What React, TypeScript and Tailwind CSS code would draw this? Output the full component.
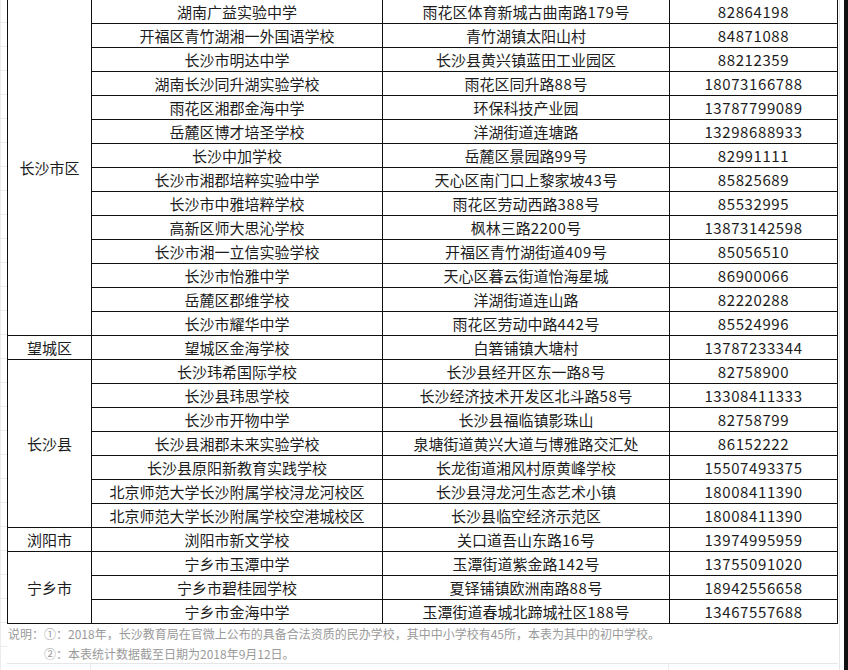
import React from "react";

type Row = [string, string, string];
type Group = { name: string; rows: Row[] };

const groups: Group[] = [
  {
    name: "长沙市区",
    rows: [
      ["湖南广益实验中学", "雨花区体育新城古曲南路179号", "82864198"],
      ["开福区青竹湖湘一外国语学校", "青竹湖镇太阳山村", "84871088"],
      ["长沙市明达中学", "长沙县黄兴镇蓝田工业园区", "88212359"],
      ["湖南长沙同升湖实验学校", "雨花区同升路88号", "18073166788"],
      ["雨花区湘郡金海中学", "环保科技产业园", "13787799089"],
      ["岳麓区博才培圣学校", "洋湖街道连塘路", "13298688933"],
      ["长沙中加学校", "岳麓区景园路99号", "82991111"],
      ["长沙市湘郡培粹实验中学", "天心区南门口上黎家坡43号", "85825689"],
      ["长沙市中雅培粹学校", "雨花区劳动西路388号", "85532995"],
      ["高新区师大思沁学校", "枫林三路2200号", "13873142598"],
      ["长沙市湘一立信实验学校", "开福区青竹湖街道409号", "85056510"],
      ["长沙市怡雅中学", "天心区暮云街道怡海星城", "86900066"],
      ["岳麓区郡维学校", "洋湖街道连山路", "82220288"],
      ["长沙市耀华中学", "雨花区劳动中路442号", "85524996"],
    ],
  },
  {
    name: "望城区",
    rows: [["望城区金海学校", "白箬铺镇大塘村", "13787233344"]],
  },
  {
    name: "长沙县",
    rows: [
      ["长沙玮希国际学校", "长沙县经开区东一路8号", "82758900"],
      ["长沙县玮思学校", "长沙经济技术开发区北斗路58号", "13308411333"],
      ["长沙市开物中学", "长沙县福临镇影珠山", "82758799"],
      ["长沙县湘郡未来实验学校", "泉塘街道黄兴大道与博雅路交汇处", "86152222"],
      ["长沙县原阳新教育实践学校", "长龙街道湘风村原黄峰学校", "15507493375"],
      ["北京师范大学长沙附属学校浔龙河校区", "长沙县浔龙河生态艺术小镇", "18008411390"],
      ["北京师范大学长沙附属学校空港城校区", "长沙县临空经济示范区", "18008411390"],
    ],
  },
  {
    name: "浏阳市",
    rows: [["浏阳市新文学校", "关口道吾山东路16号", "13974995959"]],
  },
  {
    name: "宁乡市",
    rows: [
      ["宁乡市玉潭中学", "玉潭街道紫金路142号", "13755091020"],
      ["宁乡市碧桂园学校", "夏铎铺镇欧洲南路88号", "18942556658"],
      ["宁乡市金海中学", "玉潭街道春城北蹄城社区188号", "13467557688"],
    ],
  },
];

const totalRows = groups.reduce((s, g) => s + g.rows.length, 0);

function Mixed({ text }: { text: string }) {
  const parts = text.split(/(\d+)/);
  return (
    <>
      {parts.map((p, i) =>
        /^\d+$/.test(p) ? (
          <span key={i} className="tracking-[0.6px]">
            {p}
          </span>
        ) : (
          <span key={i}>{p}</span>
        )
      )}
    </>
  );
}

export default function App() {
  const cells: React.ReactNode[] = [];
  let r = 0;
  groups.forEach((g, gi) => {
    g.rows.forEach((row, i) => {
      if (i === 0) {
        cells.push(
          <div
            key={`g${gi}`}
            className="bg-white flex items-center justify-center col-start-1"
            style={{ gridRowStart: r + 1, gridRowEnd: r + 1 + g.rows.length }}
          >
            {g.name}
          </div>
        );
      }
      cells.push(
        <div key={`a${r}`} className="bg-white flex items-center justify-center col-start-2 whitespace-nowrap" style={{ gridRowStart: r + 1 }}>
          {row[0]}
        </div>,
        <div key={`b${r}`} className="bg-white flex items-center justify-center col-start-3 whitespace-nowrap" style={{ gridRowStart: r + 1 }}>
          <Mixed text={row[1]} />
        </div>,
        <div key={`c${r}`} className="bg-white flex items-center justify-center col-start-4 tracking-[0.6px]" style={{ gridRowStart: r + 1 }}>
          {row[2]}
        </div>
      );
      r++;
    });
  });

  return (
    <div
      className="w-[848px] h-[670px] overflow-hidden bg-white flex text-[#1c1c1c]"
      style={{ fontFamily: '"Noto Sans CJK SC", "Noto Sans", sans-serif' }}
    >
      {/* left gutter */}
      <div className="w-[7px] shrink-0 flex flex-col border-l border-[#ececec] -mt-px">
        {Array.from({ length: totalRows + 2 }).map((_, i) => (
          <div key={i} className="h-[24px] shrink-0 border-b border-[#ececec]" />
        ))}
      </div>

      {/* main */}
      <div className="w-[831px] shrink-0 flex flex-col">
        <div className="-mt-px grid grid-cols-[83px_290px_286px_167px] grid-rows-[repeat(26,23px)] gap-px bg-[#111] p-px text-[15px] leading-none">
          {cells}
        </div>
        <div className="relative h-[40px] text-[12px] leading-[20px] text-[#9a9a9a] pl-px border-b border-[#e6e6e6]">
          <div>说明：①：2018年，长沙教育局在官微上公布的具备合法资质的民办学校，其中中小学校有45所，本表为其中的初中学校。</div>
          <div className="pl-[36px]">②：本表统计数据截至日期为2018年9月12日。</div>
        </div>
        <div className="flex-1 flex">
          <div className="w-[84px] border-r border-[#ececec]" />
          <div className="w-[578px] border-r border-[#ececec]" />
        </div>
      </div>

      {/* right gutter */}
      <div className="w-[6px] shrink-0 flex">
        <div className="w-[2px] border-r border-[#e6e6e6]" />
      </div>
      <div className="w-[4px] shrink-0 bg-[#111]" />
    </div>
  );
}
